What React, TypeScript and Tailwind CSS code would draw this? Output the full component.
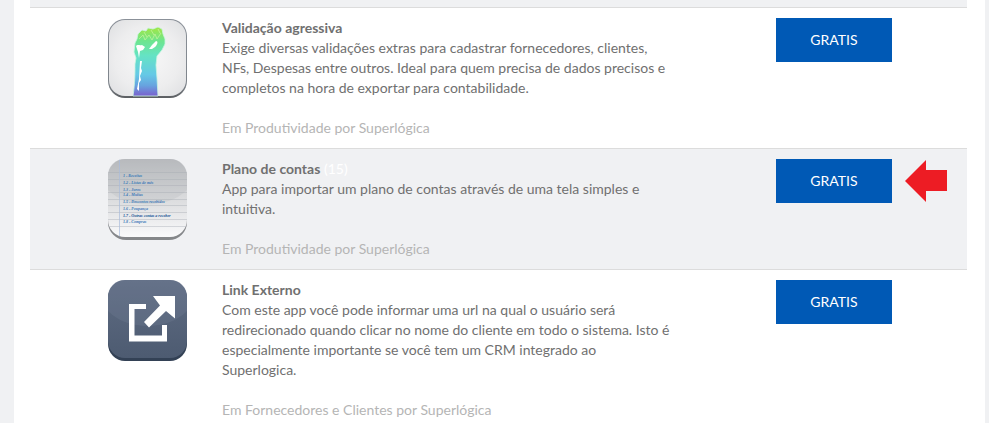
import type { ReactNode } from "react";

type AppEntry = {
  name: string;
  count?: string;
  description: string;
  category: string;
  icon: ReactNode;
  highlighted?: boolean;
};

function TileDefs({ id, top, bottom }: { id: string; top: string; bottom: string }) {
  return (
    <defs>
      <linearGradient id={`${id}-face`} x1="0" y1="0" x2="0" y2="1">
        <stop offset="0" stopColor={top} />
        <stop offset="1" stopColor={bottom} />
      </linearGradient>
      <clipPath id={`${id}-clip`}>
        <rect x="0" y="0" width="79" height="78" rx="16" />
      </clipPath>
    </defs>
  );
}

function FistIcon() {
  return (
    <svg viewBox="0 0 79 81" className="h-[81px] w-[79px] shrink-0" aria-hidden="true">
      <defs>
        <radialGradient id="fist-bg" cx="0.5" cy="0.5" r="0.7">
          <stop offset="0" stopColor="#f8f8f8" />
          <stop offset="0.6" stopColor="#ededee" />
          <stop offset="1" stopColor="#dedfe1" />
        </radialGradient>
        <linearGradient id="fist-rim" x1="0" y1="0" x2="0" y2="1">
          <stop offset="0" stopColor="#8b9199" />
          <stop offset="0.85" stopColor="#7d838a" />
          <stop offset="1" stopColor="#5b5e61" />
        </linearGradient>
        <linearGradient id="fist-fill" x1="0" y1="9" x2="0" y2="77" gradientUnits="userSpaceOnUse">
          <stop offset="0" stopColor="#a4e641" />
          <stop offset="0.2" stopColor="#6ee58d" />
          <stop offset="0.42" stopColor="#65e3c4" />
          <stop offset="0.7" stopColor="#65c9e6" />
          <stop offset="0.86" stopColor="#67a3df" />
          <stop offset="1" stopColor="#7866cf" />
        </linearGradient>
      </defs>
      <rect x="0" y="1" width="79" height="79" rx="17" fill="url(#fist-rim)" />
      <rect x="1" y="2" width="77" height="76" rx="16" fill="url(#fist-bg)" />
      <path
        d="M25 78 C27 65 27 55 27 46 L28 40 L26 34 L27 25 L29 21 L30 16 L34 12 L38 13 L40 10 L45 11 L50 9 L54 11 L55 16 L57 21 L57 26 L54 32 L49 38 L48 47 L49 60 L50 78 Z"
        fill="url(#fist-fill)"
        stroke="#c8f5e2"
        strokeWidth="0.8"
      />
      <path
        d="M31 21 L35 17 L37 22 L41 17 L44 22 L47 16 L49 21 L53 15 M36 14 L39 19 M43 12 L46 17 M50 11 L52 15"
        fill="none"
        stroke="#c2f29c"
        strokeWidth="0.8"
      />
      <path d="M28 28 C30 26 31 28 34 27 L37 29 L35 32 L32 33 L31 40 L30 34 Z" fill="#fff" />
      <path d="M41 31 L44 27 L48 23 C50 23 50 26 47 29 L44 31 Z" fill="#fff" />
      <path d="M32 43 L34 43 L33 50 L34 53 L32 58 L33 62 L31 65 L31 73 L29 71 L31 61 Z" fill="#fff" />
    </svg>
  );
}

const accountLines = [
  { y: 18, text: "1 - Receitas" },
  { y: 25, text: "1.2 - Listas de mês" },
  { y: 32, text: "1.3 - Juros" },
  { y: 37, text: "1.4 - Multas" },
  { y: 44, text: "1.5 - Descontos recebidos" },
  { y: 51, text: "1.6 - Poupança" },
  { y: 58, text: "1.7 - Outras contas a receber", strong: true },
  { y: 64, text: "1.8 - Compras" },
];

function AccountsIcon() {
  return (
    <svg viewBox="0 0 79 81" className="h-[81px] w-[79px] shrink-0" aria-hidden="true">
      <TileDefs id="accounts" top="#babcbf" bottom="#fafafb" />
      <rect x="0" y="1" width="79" height="80" rx="18" fill="#85878a" />
      <rect x="0" y="0" width="79" height="78" rx="17" fill="url(#accounts-face)" />
      <g clipPath="url(#accounts-clip)">
        <path d="M0 0 H79 V31 C60 50 19 50 0 31 Z" fill="#aeb3b7" opacity="0.25" />
        <path
          d="M0 13.5H79M0 20.5H79M0 26.5H79M0 33.5H79M0 40.5H79M0 46.5H79M0 53.5H79M0 60.5H79M0 67.5H79"
          stroke="#a4abb2"
          strokeOpacity="0.4"
        />
        <path d="M11.5 0V78" stroke="#a9bcdc" strokeOpacity="0.7" />
      </g>
      <g fill="#3a7ab8" fontFamily="'Liberation Serif', serif" fontSize="4" fontStyle="italic" fontWeight="700">
        {accountLines.map((line) => (
          <text key={line.y} x="15" y={line.y} fill={line.strong ? "#134f95" : undefined}>
            {line.text}
          </text>
        ))}
      </g>
    </svg>
  );
}

function ExternalIcon() {
  return (
    <svg viewBox="0 0 79 81" className="h-[81px] w-[79px] shrink-0" aria-hidden="true">
      <TileDefs id="external" top="#5f6c83" bottom="#4d5b71" />
      <rect x="0" y="1" width="79" height="80" rx="17" fill="#334155" />
      <rect x="0" y="0" width="79" height="78" rx="17" fill="url(#external-face)" />
      <g clipPath="url(#external-clip)">
        <path d="M0 0 H79 V31 C60 51 19 51 0 31 Z" fill="#77849a" opacity="0.25" />
      </g>
      <path d="M38 24 H21 V61.5 H59 V45 H54 V55.5 H26.5 V29 H38 Z" fill="#fff" />
      <path d="M45 16 H67 V38.5 L58 31 L41 47.5 L36 42 L52 25.5 Z" fill="#fff" />
    </svg>
  );
}

function PointerArrow() {
  return (
    <svg viewBox="0 0 42 42" className="h-[42px] w-[42px] shrink-0" aria-hidden="true">
      <path d="M0 21 L21 0 V10 H42 V31 H21 V42 Z" fill="#ed1c24" />
    </svg>
  );
}

const apps: AppEntry[] = [
  {
    name: "Validação agressiva",
    description:
      "Exige diversas validações extras para cadastrar fornecedores, clientes, NFs, Despesas entre outros. Ideal para quem precisa de dados precisos e completos na hora de exportar para contabilidade.",
    category: "Em Produtividade por Superlógica",
    icon: <FistIcon />,
  },
  {
    name: "Plano de contas",
    count: "(15)",
    description: "App para importar um plano de contas através de uma tela simples e intuitiva.",
    category: "Em Produtividade por Superlógica",
    icon: <AccountsIcon />,
    highlighted: true,
  },
  {
    name: "Link Externo",
    description:
      "Com este app você pode informar uma url na qual o usuário será redirecionado quando clicar no nome do cliente em todo o sistema. Isto é especialmente importante se você tem um CRM integrado ao Superlogica.",
    category: "Em Fornecedores e Clientes por Superlógica",
    icon: <ExternalIcon />,
  },
];

function AppRow({ app }: { app: AppEntry }) {
  return (
    <li
      className={`flex items-start border-b border-[#dcdcdc] py-2.5 pr-5 pl-[78px] ${
        app.highlighted ? "bg-[#f0f1f3]" : "bg-white"
      }`}
    >
      {app.icon}
      <div className="ml-[35px] min-w-0 flex-1">
        <div className="max-w-[450px]">
          <h2 className="font-bold">
            {app.name}
            {app.count && <span className="font-normal text-white"> {app.count}</span>}
          </h2>
          <p>{app.description}</p>
          <p className="mt-5 text-[#b5b5b5]">{app.category}</p>
        </div>
      </div>
      <div className="flex w-[171px] shrink-0 items-center gap-[13px]">
        <button
          type="button"
          aria-label={`GRATIS ${app.name}`}
          className="h-11 w-[116px] shrink-0 cursor-pointer bg-[#0059b5] text-white"
        >
          GRATIS
        </button>
        {app.highlighted && <PointerArrow />}
      </div>
    </li>
  );
}

export default function App() {
  return (
    <div className="h-screen overflow-hidden bg-[#f0f1f3] pr-1 pl-3.5 font-['Lato',sans-serif] text-sm leading-5 text-[#707070]">
      <main className="min-h-full bg-white pr-[18px] pl-4">
        <div className="h-2 border-b border-[#dcdcdc] bg-[#f0f1f3]" />
        <ul>
          {apps.map((app) => (
            <AppRow key={app.name} app={app} />
          ))}
        </ul>
      </main>
    </div>
  );
}
